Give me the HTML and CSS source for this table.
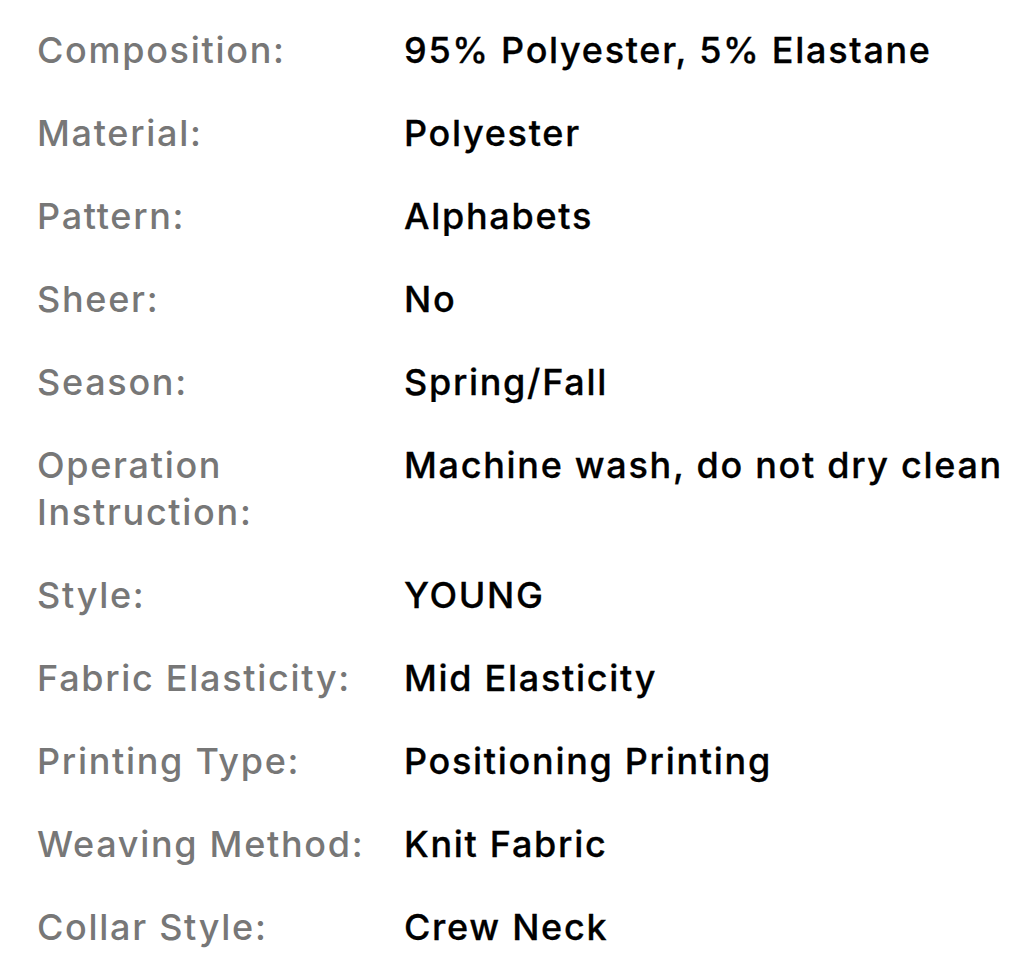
FILE: index.html
```html
<!DOCTYPE html>
<html lang="en">
<head>
<meta charset="utf-8">
<title>Product details</title>
<link rel="stylesheet" href="styles.css">
</head>
<body>
<dl class="specs">
  <dt class="label">Composition:</dt><dd class="value">95% Polyester, 5% Elastane</dd>
  <dt class="label">Material:</dt><dd class="value">Polyester</dd>
  <dt class="label">Pattern:</dt><dd class="value">Alphabets</dd>
  <dt class="label">Sheer:</dt><dd class="value">No</dd>
  <dt class="label">Season:</dt><dd class="value">Spring/Fall</dd>
  <dt class="label">Operation Instruction:</dt><dd class="value">Machine wash, do not dry clean</dd>
  <dt class="label">Style:</dt><dd class="value">YOUNG</dd>
  <dt class="label">Fabric Elasticity:</dt><dd class="value">Mid Elasticity</dd>
  <dt class="label">Printing Type:</dt><dd class="value">Positioning Printing</dd>
  <dt class="label">Weaving Method:</dt><dd class="value">Knit Fabric</dd>
  <dt class="label">Collar Style:</dt><dd class="value">Crew Neck</dd>
</dl>
</body>
</html>
```
FILE: styles.css
```css
html, body {
  margin: 0;
  padding: 0;
  background: #ffffff;
}
body {
  font-family: Inter, "Noto Sans", "Liberation Sans", sans-serif;
  font-size: 36px;
  font-weight: 500;
  line-height: 47px;
  letter-spacing: 1.7px;
  overflow: hidden;
}
.specs {
  display: grid;
  grid-template-columns: 367px 1fr;
  row-gap: 36px;
  margin: 0;
  padding: 27px 0 0 37px;
}
.label {
  margin: 0;
  color: #777777;
  padding-right: 20px;
}
.value {
  margin: 0;
  color: #000000;
  white-space: nowrap;
  -webkit-text-stroke: 0.3px #000000;
}
```
